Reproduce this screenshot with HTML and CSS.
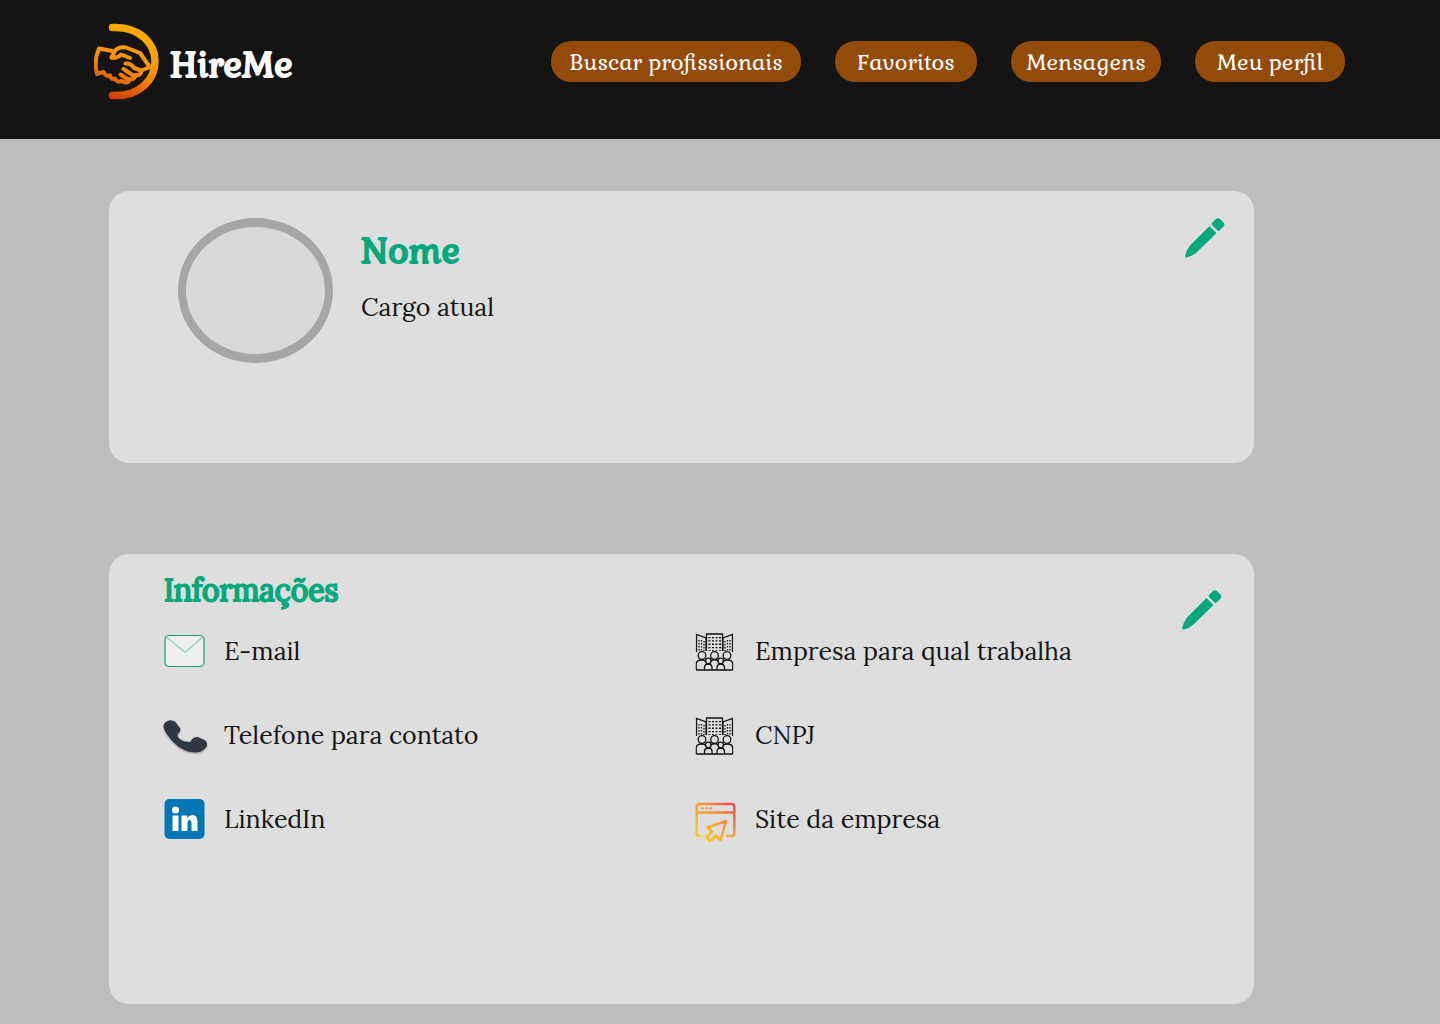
FILE: index.html
```html
<!DOCTYPE html>
<html lang="pt-BR">
<head>
<meta charset="utf-8">
<meta name="viewport" content="width=device-width, initial-scale=1">
<title>HireMe</title>
<link rel="stylesheet" href="styles.css">
</head>
<body>
<svg class="defs" aria-hidden="true">
  <defs>
    <symbol id="pencil" viewBox="0 0 40 40">
      <path d="M24.500 8L31.500 15L12 34Q7 38.500 1.500 39.500Q-.300 39.500 .200 37.500Q1.500 32 5 27.500z"/>
      <path d="M27.200 7.200Q26 6 27.200 4.800L31 1Q33 -.500 35 1L38.500 4.500Q40.300 6.500 38.500 8.500L34.800 12.300Q33.500 13.500 32.300 12.300z"/>
    </symbol>
    <symbol id="company" viewBox="0 0 38 38">
      <g fill="none" stroke="#111" stroke-width="1.300">
        <path d="M1 19V1.500L10.500 5V18M11 18V1h16v17M27.500 18V5L37 1.500V19"/>
        <path d="M3.500 7v11M6 7v11M8.500 8v10M29.500 8v10M32 7v11M34.500 7v11" stroke-dasharray="1.500 1.500"/>
        <path d="M14 4v14M17.500 4v14M21 4v14M24.500 4v14" stroke-width="2" stroke-dasharray="1.300 2"/>
        <circle cx="6.500" cy="22.500" r="3.800"/><circle cx="19" cy="22.500" r="3.800"/><circle cx="31.500" cy="22.500" r="3.800"/>
        <circle cx="12.800" cy="28" r="2.800"/><circle cx="25.200" cy="28" r="2.800"/>
        <path d="M.700 37V31Q1 27 6 27Q9 27 10.500 28.500M15 28Q19 25.500 23 28M27.500 28.500Q29 27 32 27Q37 27 37.300 31V37M9 37V34Q9.500 31 12.800 31T16.500 34V37M21.500 37V34Q22 31 25.200 31T29 34V37M.700 37h36.600"/>
      </g>
    </symbol>
  </defs>
</svg>

<header class="topbar">
  <a class="brand" href="#">
    <svg class="brand-mark" viewBox="0 0 66 78" fill="none" stroke="url(#flame)" stroke-linecap="round" stroke-linejoin="round" aria-hidden="true">
      <defs>
        <linearGradient id="flame" gradientUnits="userSpaceOnUse" x1="44" y1="16" x2="20" y2="77">
          <stop offset="0" stop-color="#ffa800"/><stop offset=".5" stop-color="#f98a08"/><stop offset="1" stop-color="#cf3d08"/>
        </linearGradient>
      </defs>
      <path stroke-width="7.500" d="M18.500 5.500C46 4 61 22 61 39.500C61 57 46 75 18.500 73.500"/>
      <g stroke-width="4">
        <path d="M18 29L5 26.500Q-.500 39 3 52L9.500 50Q11.500 55 16 53.500Q17 58 21 56.500Q23 61 27 59L31.500 60.500Q35.500 60.500 35.500 57Q41 58 41.500 53Q47 54 47.500 48.500L56 45"/>
        <path d="M17.500 35.500L21 29Q24 24.500 32 25.500L46 31L55 44"/>
        <path d="M17.500 35.500Q23 37 27 32.500L36 36"/>
        <path d="M31.500 41.500Q37 41 40 46L47 48.500M29.500 47L40 54M26.500 52.500L35 58"/>
      </g>
    </svg>
    <span class="brand-name">HireMe</span>
  </a>
  <nav class="nav">
    <a class="pill pill-wide" href="#">Buscar profissionais</a>
    <a class="pill pill-narrow" href="#">Favoritos</a>
    <a class="pill" href="#">Mensagens</a>
    <a class="pill" href="#">Meu perfil</a>
  </nav>
</header>

<main class="page">
  <section class="card profile">
    <div class="avatar"></div>
    <div class="card-body identity">
      <h1 class="name">Nome</h1>
      <p class="text">Cargo atual</p>
    </div>
    <button class="edit" type="button" aria-label="Editar perfil"><svg aria-hidden="true"><use href="#pencil"/></svg></button>
  </section>

  <section class="card info">
    <div class="card-body">
      <h2 class="title">Informações</h2>
      <ul class="fields">
        <li class="field text">
          <svg class="icon" viewBox="0 0 40 40" aria-hidden="true"><rect x=".500" y="4.500" width="39" height="31" rx="4" fill="#eee" stroke="#1a9f73" stroke-width="1.200"/><path d="M2 6l18.500 15.500L38 6" fill="none" stroke="#83cdb3" stroke-width="1.200"/></svg>
          E-mail
        </li>
        <li class="field text">
          <svg class="icon" viewBox="0 -2 40 40" aria-hidden="true"><use href="#company" width="38" height="38"/></svg>
          Empresa para qual trabalha
        </li>
        <li class="field text">
          <svg class="icon phone" viewBox="1 -1 41 41" aria-hidden="true"><path d="M2 6.500Q7 2.500 12 6L17 12.500Q18 16 15 18Q13.500 20 15.500 22.500Q19 26 25.500 26.500Q28 27 29 24Q31 21 35 21.500L42 24.500Q46 27 44 31.500Q40 37.500 32 37.500Q20 37 10 27Q1 17 0 11Q0 8 2 6.500z" fill="#2f3840"/></svg>
          Telefone para contato
        </li>
        <li class="field text">
          <svg class="icon" viewBox="0 -2 40 40" aria-hidden="true"><use href="#company" width="38" height="38"/></svg>
          CNPJ
        </li>
        <li class="field text">
          <svg class="icon" viewBox="0 0 40 40" aria-hidden="true"><rect width="40" height="40" rx="5" fill="#0077b5"/><circle cx="11" cy="11" r="3.600" fill="#fff"/><path fill="#fff" d="M8 16.500h6V32H8zM17 16.500h5.700v2.300Q25 16 28 16Q33 16 33 23V32h-6v-7.500Q27 21 25 21Q23 21 23 24.500V32h-6z"/></svg>
          LinkedIn
        </li>
        <li class="field text">
          <svg class="icon" viewBox="0 -2 40 40" fill="none" stroke="url(#sunset)" stroke-width="2.600" stroke-linecap="round" stroke-linejoin="round" aria-hidden="true">
            <defs><linearGradient id="sunset" gradientUnits="userSpaceOnUse" x1="38" y1="3" x2="8" y2="36"><stop offset="0" stop-color="#ee4f4c"/><stop offset=".5" stop-color="#f69a3c"/><stop offset="1" stop-color="#fcc81c"/></linearGradient></defs>
            <path d="M4 35Q1.200 35 1.200 32V6Q1.200 3 4 3H36Q38.800 3 38.800 6V32Q38.800 35 36 35H32M1.200 11.500H38.800M7 7.300h.100M11 7.300h.100M15 7.300h.100"/>
            <path d="M30.500 20L12 26.500L16.500 30.500L11 36.500L14.500 40L20.500 35L25 39z"/>
          </svg>
          Site da empresa
        </li>
      </ul>
    </div>
    <button class="edit" type="button" aria-label="Editar informações"><svg aria-hidden="true"><use href="#pencil"/></svg></button>
  </section>
</main>
</body>
</html>
```
FILE: styles.css
```css
* {
  box-sizing: border-box;
}

body {
  margin: 0;
  min-height: 100vh;
  background: #bdbdbd;
  color: #141414;
  font-family: Lora, "Liberation Serif", serif;
}

h1, h2, p, ul {
  margin: 0;
  padding: 0;
}

a {
  color: inherit;
  text-decoration: none;
}

.defs {
  display: none;
}

.topbar {
  display: flex;
  justify-content: space-between;
  align-items: flex-start;
  min-height: 139px;
  padding: 22px 95px 22px 94px;
  background: #141414;
  color: #fff;
  font-family: Gabriela, Lora, "Liberation Serif", serif;
}

.brand {
  display: flex;
  align-items: center;
  gap: 10px;
}

.brand-mark {
  width: 66px;
  height: 78px;
}

.brand-name,
.name,
.title {
  font-weight: 400;
  -webkit-text-stroke: 2px currentColor;
}

.brand-name {
  padding-top: 8px;
  font-size: 35px;
  line-height: 44px;
}

.nav {
  display: flex;
  gap: 34px;
  padding-top: 19px;
}

.pill {
  display: flex;
  align-items: center;
  justify-content: center;
  min-width: 150px;
  height: 41px;
  border-radius: 20px;
  background: #934b0a;
  font-size: 22px;
  line-height: 32px;
  white-space: nowrap;
}

.pill-wide {
  min-width: 250px;
}

.pill-narrow {
  min-width: 142px;
}

.page {
  display: grid;
  gap: 91px;
  padding: 52px 186px 20px 109px;
}

.card {
  display: flex;
  align-items: flex-start;
  border-radius: 20px;
  background: #dedede;
}

.card-body {
  flex: 1;
}

.profile {
  min-height: 272px;
  padding: 27px 29px 27px 69px;
  gap: 28px;
}

.info {
  min-height: 450px;
  padding: 16px 32px 16px 55px;
}

.avatar {
  width: 155px;
  height: 145px;
  border: 9px solid #a6a6a6;
  border-width: 9px 8px;
  border-radius: 50%;
  background: #d9d9d9;
}

.identity {
  padding-top: 9px;
}

.name {
  margin-bottom: 14px;
  color: #05a87a;
  font-family: Gabriela, Lora, "Liberation Serif", serif;
  font-size: 35px;
  line-height: 48px;
}

.text {
  font-size: 25px;
  line-height: 36px;
}

.title {
  color: #05a87a;
  font-size: 30px;
  line-height: 40px;
}

.fields {
  display: grid;
  grid-template-columns: 531px 1fr;
  row-gap: 44px;
  padding-top: 21px;
  list-style: none;
}

.field {
  display: flex;
  align-items: center;
  gap: 19px;
  height: 40px;
}

.icon {
  flex: none;
  width: 41px;
  height: 40px;
  overflow: visible;
}

.phone {
  filter: drop-shadow(0 1px 1px #999);
}

.edit {
  width: 40px;
  height: 40px;
  padding: 0;
  border: 0;
  background: none;
  color: #05a87a;
  cursor: pointer;
}

.info .edit {
  margin-top: 20px;
}

.edit svg {
  display: block;
  width: 40px;
  height: 40px;
  fill: currentColor;
}
```
